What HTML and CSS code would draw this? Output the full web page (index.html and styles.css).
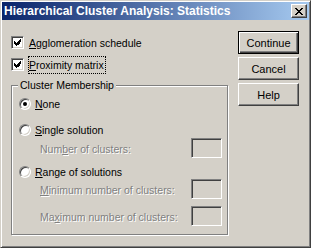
FILE: index.html
```html
<!DOCTYPE html>
<html lang="en">
<head>
    <meta charset="UTF-8">
    <title>Hierarchical Cluster Analysis: Statistics</title>
    <link rel="stylesheet" href="styles.css">
</head>
<body>
<div class="window">
    <div class="titlebar">
        <span class="title">Hierarchical Cluster Analysis: Statistics</span>
        <span class="close">
            <svg width="8" height="7" viewBox="0 0 8 7" shape-rendering="crispEdges">
                <path d="M0 0h2v1h-2zM6 0h2v1h-2zM1 1h2v1h-2zM5 1h2v1h-2zM2 2h4v1h-4zM3 3h2v1h-2zM2 4h4v1h-4zM1 5h2v1h-2zM5 5h2v1h-2zM0 6h2v1h-2zM6 6h2v1h-2z" fill="#000"/>
            </svg>
        </span>
    </div>
    <div class="content">
        <div class="left">
            <div class="check-row">
                <span class="checkbox">
                    <svg width="7" height="7" viewBox="0 0 7 7" shape-rendering="crispEdges">
                        <path d="M6 0h1v3h-1zM5 1h1v4h-1zM4 2h1v4h-1zM0 2h1v3h-1zM1 3h1v3h-1zM2 4h1v3h-1zM3 3h1v3h-1z" fill="#000"/>
                    </svg>
                </span>
                <span class="label"><u>A</u>gglomeration schedule</span>
            </div>
            <div class="check-row second">
                <span class="checkbox">
                    <svg width="7" height="7" viewBox="0 0 7 7" shape-rendering="crispEdges">
                        <path d="M6 0h1v3h-1zM5 1h1v4h-1zM4 2h1v4h-1zM0 2h1v3h-1zM1 3h1v3h-1zM2 4h1v3h-1zM3 3h1v3h-1z" fill="#000"/>
                    </svg>
                </span>
                <span class="label focused"><u>P</u>roximity matrix</span>
            </div>

            <div class="group">
                <span class="legend">Cluster Membership</span>
                <div class="radio-row">
                    <span class="radio on"></span>
                    <span><u>N</u>one</span>
                </div>
                <div class="radio-row single">
                    <span class="radio"></span>
                    <span><u>S</u>ingle solution</span>
                </div>
                <div class="field first">
                    <span class="disabled">Num<u>b</u>er of clusters:</span>
                    <span class="input"></span>
                </div>
                <div class="radio-row range">
                    <span class="radio"></span>
                    <span><u>R</u>ange of solutions</span>
                </div>
                <div class="field min">
                    <span class="disabled"><u>M</u>inimum number of clusters:</span>
                    <span class="input"></span>
                </div>
                <div class="field max">
                    <span class="disabled">Ma<u>x</u>imum number of clusters:</span>
                    <span class="input"></span>
                </div>
            </div>
        </div>

        <div class="buttons">
            <button class="btn default">Continue</button>
            <button class="btn">Cancel</button>
            <button class="btn">Help</button>
        </div>
    </div>
</div>
</body>
</html>
```

FILE: styles.css
```css
* {
    margin: 0;
    padding: 0;
    box-sizing: border-box;
}

body {
    background-color: #d4d0c8;
    font-family: "Liberation Sans", Arial, sans-serif;
    font-size: 10.5px;
    color: #000;
}

.window {
    width: 311px;
    height: 248px;
    padding: 1px;
    background-color: #d4d0c8;
    border: 1px solid;
    border-color: #d4d0c8 #404040 #404040 #d4d0c8;
    box-shadow: inset 1px 1px 0 #fff, inset -1px -1px 0 #808080;
}

.titlebar {
    height: 18px;
    display: flex;
    align-items: center;
    justify-content: space-between;
    padding: 0 2px 0 2px;
    background: linear-gradient(to right, #0a246a, #a6caf0);
}

.title {
    color: #fff;
    font-weight: bold;
    font-size: 12px;
    white-space: nowrap;
}

.close {
    width: 16px;
    height: 14px;
    display: flex;
    align-items: center;
    justify-content: center;
    padding-right: 1px;
    border: 1px solid;
    border-color: #fff #404040 #404040 #fff;
    box-shadow: inset -1px -1px 0 #808080;
    background-color: #d4d0c8;
}

.content {
    display: flex;
    padding-left: 9px;
}

.left {
    width: 217px;
}

.check-row {
    display: flex;
    align-items: center;
    height: 13px;
    margin-top: 16px;
}

.check-row.second {
    margin-top: 9px;
}

.checkbox {
    width: 13px;
    height: 13px;
    flex: none;
    display: flex;
    align-items: center;
    justify-content: center;
    background-color: #fff;
    border: 1px solid;
    border-color: #808080 #fff #fff #808080;
    box-shadow: inset 1px 1px 0 #404040, inset -1px -1px 0 #d4d0c8;
}

.label {
    margin-left: 4px;
    padding: 1px 1px 1px 0;
    line-height: 14px;
    border: 1px dotted transparent;
}

.label.focused {
    border-color: #000;
}

.group {
    position: relative;
    margin-top: 14px;
    height: 150px;
    padding: 12px 5px 0 7px;
    border: 1px solid #808080;
    box-shadow: 1px 1px 0 #fff, inset 1px 1px 0 #fff;
}

.legend {
    position: absolute;
    top: -7px;
    left: 6px;
    padding: 0 2px;
    line-height: 13px;
    background-color: #d4d0c8;
}

.radio-row {
    display: flex;
    align-items: center;
    height: 12px;
    gap: 4px;
}

.radio-row.single {
    margin-top: 14px;
}

.radio-row.range {
    margin-top: 8px;
}

.radio {
    width: 12px;
    height: 12px;
    flex: none;
    border-radius: 50%;
    background-color: #fff;
    border: 1px solid;
    border-color: #808080 #fff #fff #808080;
    box-shadow: inset 1px 1px 0 #404040, inset -1px -1px 0 #d4d0c8;
    display: flex;
    align-items: center;
    justify-content: center;
}

.radio.on::after {
    content: "";
    width: 4px;
    height: 4px;
    border-radius: 50%;
    background-color: #000;
}

.field {
    display: flex;
    align-items: center;
    justify-content: space-between;
    height: 20px;
    padding-left: 21px;
}

.field.first {
    margin-top: 2px;
}

.field.min {
    margin-top: 1px;
}

.field.max {
    margin-top: 7px;
}

.disabled {
    color: #808080;
    text-shadow: 1px 1px 0 #fff;
    padding-top: 2px;
}

.disabled u {
    text-decoration-color: #808080;
}

.input {
    width: 31px;
    height: 20px;
    border: 1px solid;
    border-color: #808080 #fff #fff #808080;
    box-shadow: inset 1px 1px 0 #404040, inset -1px -1px 0 #d4d0c8;
}

.buttons {
    display: flex;
    flex-direction: column;
    gap: 3px;
    margin-top: 11px;
    margin-left: 10px;
}

.btn {
    width: 61px;
    height: 23px;
    font-family: "Liberation Sans", Arial, sans-serif;
    font-size: 11px;
    color: #000;
    background-color: #d4d0c8;
    border: 1px solid;
    border-color: #fff #404040 #404040 #fff;
    box-shadow: inset -1px -1px 0 #808080;
}

.btn.default {
    border-color: #000;
    box-shadow: inset 1px 1px 0 #fff, inset -1px -1px 0 #404040, inset -2px -2px 0 #808080;
}
```
